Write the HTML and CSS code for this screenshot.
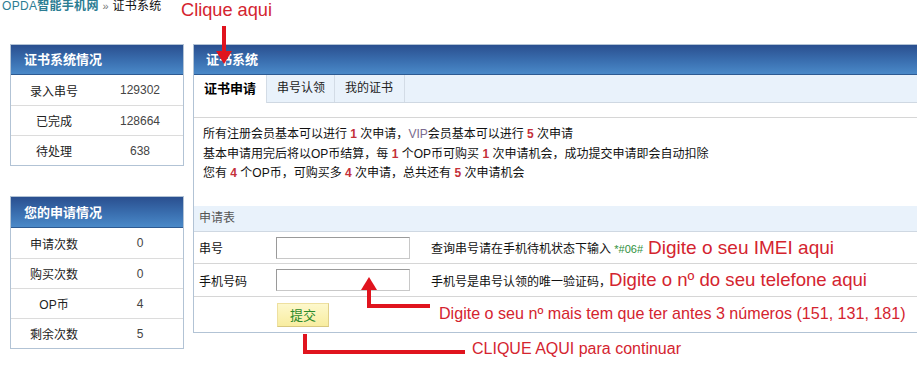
FILE: index.html
```html
<!DOCTYPE html>
<html>
<head>
<meta charset="utf-8">
<link rel="stylesheet" href="styles.css">
</head>
<body>
<div class="page">
  <div class="crumb"><span class="site">OPDA<b>智能手机网</b></span> <span class="sep">»</span> 证书系统</div>

  <div class="layout">
    <div class="side">
      <div class="box">
        <div class="box-head">证书系统情况</div>
        <div class="stat"><span>录入串号</span><span>129302</span></div>
        <div class="stat"><span>已完成</span><span>128664</span></div>
        <div class="stat"><span>待处理</span><span>638</span></div>
      </div>
      <div class="box box2">
        <div class="box-head">您的申请情况</div>
        <div class="stat"><span>申请次数</span><span>0</span></div>
        <div class="stat"><span>购买次数</span><span>0</span></div>
        <div class="stat"><span>OP币</span><span>4</span></div>
        <div class="stat"><span>剩余次数</span><span>5</span></div>
      </div>
    </div>

    <div class="main">
      <div class="box-head main-head">证书系统</div>
      <div class="tabs">
        <div class="tab active">证书申请</div>
        <div class="tab t2">串号认领</div>
        <div class="tab t3">我的证书</div>
      </div>
      <div class="info">
        <p>所有注册会员基本可以进行 <b>1</b> 次申请，<span class="vip">VIP</span>会员基本可以进行 <b>5</b> 次申请</p>
        <p>基本申请用完后将以OP币结算，每 <b>1</b> 个OP币可购买 <b>1</b> 次申请机会，成功提交申请即会自动扣除</p>
        <p>您有 <b>4</b> 个OP币，可购买多 <b>4</b> 次申请，总共还有 <b>5</b> 次申请机会</p>
      </div>
      <div class="form-head">申请表</div>
      <div class="row">
        <span class="label">串号</span>
        <span class="input"></span>
        <span class="hint">查询串号请在手机待机状态下输入 <em>*#06#</em></span>
        <span class="note note-big">Digite o seu IMEI aqui</span>
      </div>
      <div class="row row2">
        <span class="label">手机号码</span>
        <span class="input"></span>
        <span class="hint">手机号是串号认领的唯一验证码，</span>
        <span class="note note-tel">Digite o nº do seu telefone aqui</span>
      </div>
      <div class="row btn-row">
        <span class="label"></span>
        <span class="btn">提交</span>
        <span class="note note-mid">Digite o seu nº mais tem que ter antes 3 números (151, 131, 181)</span>
      </div>
    </div>
  </div>

  <div class="ann ann-top">Clique aqui</div>
  <div class="ann ann-bottom">CLIQUE AQUI para continuar</div>
  <svg class="arrows" width="917" height="370" viewBox="0 0 917 370">
    <g stroke="#e0141e" stroke-width="4" fill="none" stroke-linecap="square">
      <path d="M224 28 V54"/>
      <path d="M428 306 H369 V287"/>
      <path d="M305 336 V352 H463"/>
    </g>
    <g fill="#e0141e">
      <polygon points="216,51 232,51 224,64"/>
      <polygon points="361,290 377,290 369,277"/>
    </g>
  </svg>
</div>
</body>
</html>
```
FILE: styles.css
```css
* { box-sizing: border-box; }
html, body { margin: 0; padding: 0; background: #fff; }
body {
  font-family: "Liberation Sans", "Noto Sans CJK SC", sans-serif;
  font-size: 12px;
  color: #222;
}
.page {
  position: relative;
  width: 917px;
  height: 370px;
  overflow: hidden;
}
.crumb {
  margin-top: -1px;
  padding-left: 2px;
  height: 14px;
  line-height: 14px;
  color: #111;
  letter-spacing: 0.3px;
}
.site { color: #2c7d93; }
.site b { font-weight: bold; }
.sep { color: #777; font-size: 11px; }

.layout {
  display: flex;
  gap: 9px;
  margin-top: 31px;
  padding-left: 10px;
}
.side {
  width: 174px;
  flex: none;
  display: flex;
  flex-direction: column;
  gap: 30px;
}
.box {
  border: 1px solid #b2c3d5;
  background: #fff;
}
.box-head {
  height: 30px;
  line-height: 30px;
  padding-left: 13px;
  color: #fff;
  font-weight: bold;
  font-size: 13px;
  background: linear-gradient(#2a4f8f, #3a6fb0 55%, #4a89c8);
  border-bottom: 1px solid #2d5a92;
}
.box2 .box-head { height: 31px; line-height: 31px; }
.stat {
  display: flex;
  height: 30px;
  align-items: center;
  border-top: 1px solid #dcdcdc;
  color: #222;
}
.box-head + .stat { border-top: none; }
.stat span { flex: 1; text-align: center; }
.stat span:last-child { color: #444; }

.main {
  width: 740px;
  flex: none;
  border: 1px solid #b2c3d5;
  border-right: none;
  height: 289px;
}
.main-head { padding-left: 12px; }
.tabs {
  display: flex;
  height: 28px;
  background: #e9f2fb;
  border-bottom: 1px solid #cfd8e2;
}
.tab {
  flex: none;
  white-space: nowrap;
  padding-left: 10px;
  line-height: 27px;
  border-right: 1px solid #d3dce6;
  color: #222;
}
.tab.active {
  width: 73px;
  background: #fff;
  font-weight: bold;
  font-size: 13px;
  color: #000;
  height: 28px;
}
.t2 { width: 68px; }
.t3 { width: 70px; }
.info {
  margin-top: 14px;
  border-top: 1px solid #d6d6d6;
  padding: 7px 0 0 9px;
  height: 89px;
}
.info p {
  margin: 0;
  line-height: 19.5px;
  color: #111;
}
.info b { color: #c4303a; font-weight: bold; }
.vip { color: #7a6a8e; }
.form-head {
  height: 26px;
  line-height: 25px;
  background: #e9f2fb;
  border-bottom: 1px solid #cfd8e2;
  padding-left: 5px;
  color: #555;
}
.row {
  display: flex;
  align-items: center;
  height: 32px;
  border-bottom: 1px solid #d6d6d6;
}
.row2 { height: 33px; }
.label {
  width: 82px;
  padding-left: 5px;
  flex: none;
  color: #111;
}
.input {
  width: 134px;
  height: 22px;
  flex: none;
  border: 1px solid #c8c8c8;
  border-top-color: #9a9a9a;
  border-left-color: #9a9a9a;
  background: #fff;
}
.hint {
  margin-left: 21px;
  color: #111;
}
.hint em {
  font-style: normal;
  color: #2f8f3c;
  font-size: 11px;
}
.note {
  color: #d4242f;
  font-family: "Liberation Sans", sans-serif;
  white-space: nowrap;
}
.note-big { font-size: 19px; margin-left: 5px; }
.note-tel { font-size: 18.6px; margin-left: -2px; }
.btn-row { border-bottom: none; height: 35px; }
.btn {
  width: 52px;
  height: 24px;
  flex: none;
  margin-left: 1px;
  text-align: center;
  line-height: 23px;
  color: #2b8a2b;
  font-size: 13px;
  background: linear-gradient(#fdf8cc, #f8eda0);
  border: 1px solid #eee0a0;
  border-right-color: #e0d08a;
  border-bottom-color: #d8c880;
}
.note-mid { font-size: 16.1px; margin-left: 110px; margin-top: -2px; }

.ann {
  position: absolute;
  color: #d4242f;
  font-family: "Liberation Sans", sans-serif;
}
.ann-top { left: 181px; top: 0; font-size: 18.2px; }
.ann-bottom { left: 472px; top: 340px; font-size: 16px; }
.arrows {
  position: absolute;
  left: 0;
  top: 0;
  pointer-events: none;
}
```
